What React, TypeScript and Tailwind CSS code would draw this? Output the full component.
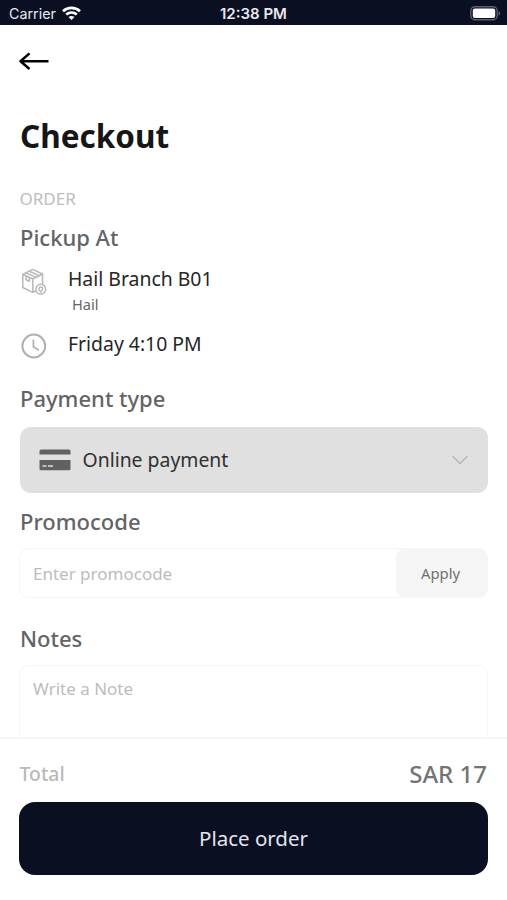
import type { ReactNode } from "react";

function WifiIcon() {
  return (
    <svg width="19" height="15" viewBox="0 0 19 15" fill="none" stroke="#fff" strokeWidth="2.7">
      <path d="M1 5.2C5.9 0.7 13.1 0.7 18 5.2" />
      <path d="M4.2 8.6C7.3 5.9 11.7 5.9 14.8 8.6" />
      <path d="M9.5 14L6.5 11C8.2 9.5 10.8 9.5 12.5 11Z" fill="#fff" stroke="none" />
    </svg>
  );
}

function BatteryIcon() {
  return (
    <svg width="31" height="15" viewBox="0 0 31 15" fill="none">
      <rect x="0.8" y="0.8" width="26.4" height="13" rx="4" stroke="#5c5f6c" strokeWidth="1.4" />
      <rect x="2.8" y="2.5" width="22.4" height="9.6" rx="2" fill="#fff" />
      <path d="M28.6 5C30.8 5.8 30.8 8.8 28.6 9.6Z" fill="#5c5f6c" />
    </svg>
  );
}

function BackIcon() {
  return (
    <svg width="30" height="18" viewBox="0 0 30 18" fill="none" stroke="#000" strokeWidth="2.5" strokeLinejoin="round">
      <path d="M29.5 9.2H1.5M10.5 1.4L1.5 9.2L10.5 17" />
    </svg>
  );
}

function BoxIcon() {
  return (
    <svg
      width="26"
      height="28"
      viewBox="0 0 26 28"
      fill="none"
      stroke="#b8b8b8"
      strokeWidth="1.5"
      strokeLinejoin="round"
    >
      <path d="M15 23L11.5 24.3L1.8 19.5V6.5L11.5 1.4L21.5 6V17" />
      <path d="M1.8 6.5L11.8 11L21.5 6M11.8 11V24.3" />
      <path d="M5 4.9L15 9.4M8.3 3.2L18.3 7.7" />
      <path d="M5 8.2V11.8L8.3 13.3V9.6" />
      <circle cx="19.8" cy="21.2" r="4.9" fill="#fff" />
      <path d="M19.8 24C18.3 22.2 18 21.4 18 20.7A1.8 1.8 0 0 1 21.6 20.7C21.6 21.4 21.3 22.2 19.8 24Z" />
    </svg>
  );
}

function ClockIcon() {
  return (
    <svg width="26" height="26" viewBox="0 0 26 26" fill="none" stroke="#b0b0b0">
      <circle cx="12.8" cy="13" r="11.4" strokeWidth="2" />
      <path d="M12.4 6.5V13.8L17.8 17.2" strokeWidth="1.7" />
    </svg>
  );
}

function CardIcon() {
  return (
    <svg width="32" height="22" viewBox="0 0 32 22" fill="#616161">
      <path d="M2 0.5H30A1.5 1.5 0 0 1 31.5 2V5.5H0.5V2A1.5 1.5 0 0 1 2 0.5Z" />
      <path d="M0.5 11H31.5V19.8A1.5 1.5 0 0 1 30 21.3H2A1.5 1.5 0 0 1 0.5 19.8Z" />
      <path d="M3.5 17H7.5M9 17H14" stroke="#e0e0e0" strokeWidth="1.6" />
    </svg>
  );
}

function SectionTitle({ children }: { children: ReactNode }) {
  return <h2 className="pl-px text-[22px] leading-8 font-medium text-[#646464]">{children}</h2>;
}

export default function App() {
  return (
    <div className="flex h-[900px] w-full flex-col overflow-hidden bg-white font-['Noto_Sans',sans-serif]">
      {/* status bar */}
      <header className="grid h-[25px] shrink-0 grid-cols-3 items-center bg-[#0a0f22] pt-0.5 pr-[6px] pl-[9px] font-['Inter',sans-serif] text-sm text-[#e8e8ee]">
        <div className="flex items-center gap-1.5">
          <span className="pt-px text-[14.3px]">Carrier</span>
          <WifiIcon />
        </div>
        <span className="-ml-[3px] text-center text-[15px] font-semibold">12:38 PM</span>
        <div className="flex justify-end">
          <BatteryIcon />
        </div>
      </header>

      {/* content */}
      <main className="min-h-0 flex-1 overflow-hidden px-[19px]">
        <button type="button" className="mt-[27px] block" aria-label="Back">
          <BackIcon />
        </button>
        <h1 className="mt-[42px] pl-px text-[31.5px] leading-12 font-bold text-[#161616]">Checkout</h1>

        <p className="mt-[27px] pl-[0.5px] text-[17px] leading-6 text-[#bdbdbd]">ORDER</p>
        <div className="mt-[10px]">
          <SectionTitle>Pickup At</SectionTitle>
        </div>
        <div className="mt-[11px] flex">
          <div className="w-[49px] pt-1 pl-0.5">
            <BoxIcon />
          </div>
          <div className="pt-px">
            <p className="text-[19.4px] leading-7 text-[#262626]">Hail Branch B01</p>
            <p className="-mt-px pl-1 text-[14.6px] leading-6 text-[#666]">Hail</p>
          </div>
        </div>
        <div className="mt-[14px] flex">
          <div className="w-[49px] pt-[3px] pl-0.5">
            <ClockIcon />
          </div>
          <p className="text-[19.4px] leading-7 text-[#262626]">Friday 4:10 PM</p>
        </div>

        <div className="mt-[23px]">
          <SectionTitle>Payment type</SectionTitle>
        </div>
        <button
          type="button"
          className="mt-[13px] ml-[0.5px] flex h-[65.5px] w-[468.5px] items-center rounded-[11px] bg-[#e0e0e0] pr-5 pl-[19px]"
        >
          <CardIcon />
          <span className="ml-3 text-[19.4px] text-[#303030]">Online payment</span>
          <svg className="ml-auto" width="16" height="10" viewBox="0 0 16 10" fill="none" stroke="#b5b5b5" strokeWidth="1.4">
            <path d="M0.5 1L8 8.5L15.5 1" />
          </svg>
        </button>

        <div className="mt-[12.5px]">
          <SectionTitle>Promocode</SectionTitle>
        </div>
        <div className="mt-[11px] flex h-[50px] rounded-[10px] border-[1.5px] border-[#f5f5f5]">
          <span className="flex-1 self-center pt-px pl-[13px] text-[17px] text-[#bcbcbc]">Enter promocode</span>
          <button type="button" className="-my-px -mr-px w-[92px] rounded-[10px] bg-[#f5f5f5] pr-[3px] text-[14.8px] text-[#707070]">
            Apply
          </button>
        </div>

        <div className="mt-[24px]">
          <SectionTitle>Notes</SectionTitle>
        </div>
        <div className="mt-[11px] h-[120px] rounded-[10px] border-[1.5px] border-[#f5f5f5] px-[13px] py-[11px] text-[17px] leading-6 text-[#bcbcbc]">
          Write a Note
        </div>
      </main>

      {/* total and submit */}
      <footer className="h-[163px] shrink-0 border-t-2 border-[#f6f6f6] px-[19px] pt-[19px]">
        <div className="flex h-8 items-center justify-between pr-px pl-[0.5px] font-medium">
          <span className="text-[19.4px] text-[#b9b9b9]">Total</span>
          <span className="text-2xl text-[#747474]">SAR 17</span>
        </div>
        <button
          type="button"
          className="mt-3 h-[73px] w-full rounded-2xl bg-[#0a0f22] text-[20.5px] text-[#e2e5f0]"
        >
          Place order
        </button>
      </footer>
    </div>
  );
}
